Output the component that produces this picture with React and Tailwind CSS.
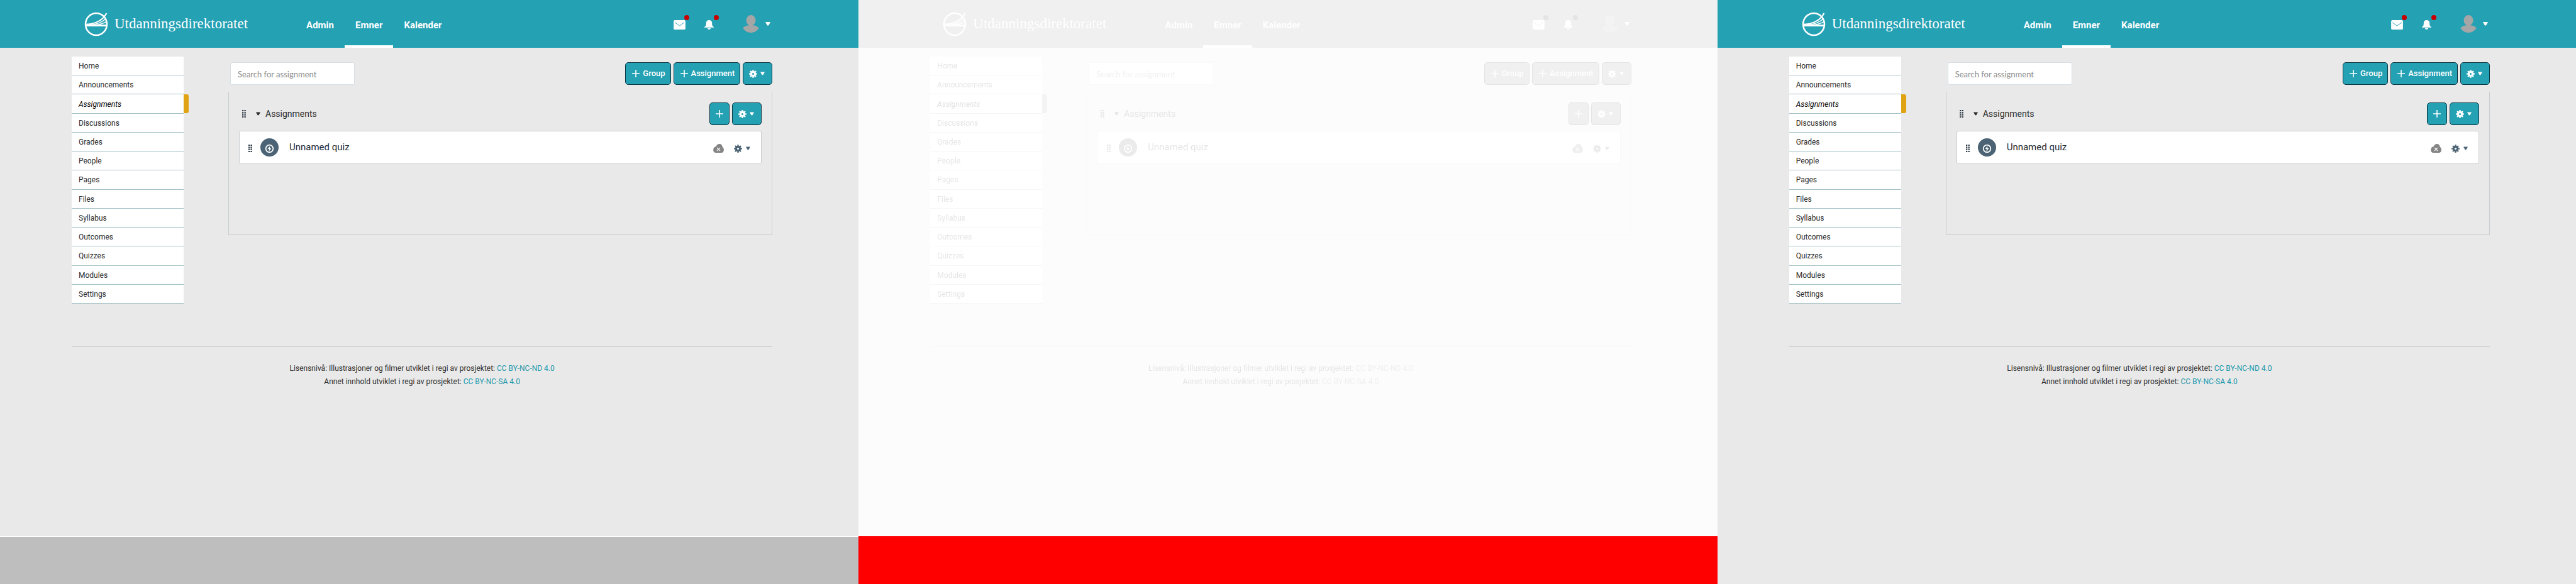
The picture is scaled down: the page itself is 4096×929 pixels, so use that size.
const MENU = [
  "Home", "Announcements", "Assignments", "Discussions", "Grades", "People", "Pages",
  "Files", "Syllabus", "Outcomes", "Quizzes", "Modules", "Settings",
];

function Logo() {
  return (
    <svg className="h-[39px] w-[38px]" viewBox="34 28 120 124" fill="none" stroke="#fff" aria-hidden="true">
      <ellipse cx="94" cy="90" rx="54" ry="56" strokeWidth="8" />
      <path d="M146 34C130 66 94 88 44 91" strokeWidth="7" />
      <path d="M142 63C124 80 92 92 60 94" strokeWidth="5" />
      <path d="M146 77C132 85 112 92 92 94" strokeWidth="5" />
      <path d="M40 97H149" strokeWidth="9" />
    </svg>
  );
}

function MailIcon() {
  return (
    <svg className="h-[15px] w-[19px]" viewBox="0 0 20 16" aria-hidden="true">
      <rect width="20" height="16" rx="2" fill="#fff" />
      <path d="M2 4l8 5.6L18 4" fill="none" stroke="#25a1b4" strokeWidth="1" />
    </svg>
  );
}

function BellIcon() {
  return (
    <svg className="h-[15px] w-[15px]" viewBox="0 0 16 16" fill="#fff" aria-hidden="true">
      <path d="M8 0C4.900 0 3 2.200 3 5c0 3.800-.5 5-3 6.800V12.500h16v-.7C13.500 10 13 8.800 13 5c0-2.800-1.900-5-5-5z" />
      <path d="M5 13.700h6C10.600 15.200 9.500 16 8 16s-2.600-.8-3-2.300z" />
    </svg>
  );
}

function Avatar() {
  return (
    <svg className="h-[28px] w-[26px]" viewBox="0 0 27 30" fill="#a6a6a6" aria-hidden="true">
      <ellipse cx="13.500" cy="9" rx="8" ry="9" />
      <path d="M10 15h7v2.500c4.500.3 8.500 2 10 5C24 27 19 30 13.500 30S3 27 0 22.500c1.500-3 5.500-4.700 10-5z" />
    </svg>
  );
}

function Caret({ className }) {
  return (
    <svg className={className} viewBox="0 0 8 6" fill="currentColor" aria-hidden="true">
      <path d="M0 0h8L5 5.500H3z" />
    </svg>
  );
}

const TEETH = [0, 45, 90, 135, 180, 225, 270, 315];

function Gear() {
  return (
    <svg className="size-[13px]" viewBox="0 0 14 14" fill="none" stroke="currentColor" aria-hidden="true">
      <circle cx="7" cy="7" r="3.400" strokeWidth="3.400" />
      {TEETH.map((a) => (
        <path key={a} d="M7 2.500V.1" strokeWidth="2.400" transform={`rotate(${a} 7 7)`} />
      ))}
    </svg>
  );
}

function Plus() {
  return (
    <svg className="size-3" viewBox="0 0 12 12" stroke="currentColor" strokeWidth="1.600" aria-hidden="true">
      <path d="M6 0v12M0 6h12" />
    </svg>
  );
}

function Handle() {
  return (
    <svg className="h-3 w-[6px] text-[#2d3b45]" viewBox="0 0 6 12" fill="currentColor" aria-hidden="true">
      {[0, 3.300, 6.600, 9.900].map((y) => (
        <path key={y} d={`M0 ${y}h2.300v2.100H0zM3.500 ${y}h2.300v2.100H3.500z`} />
      ))}
    </svg>
  );
}

function QuizIcon() {
  return (
    <svg className="size-[29px]" viewBox="0 0 30 30" aria-hidden="true">
      <circle cx="15" cy="15" r="15" fill="#4b6374" />
      <circle cx="15" cy="17" r="6" fill="none" stroke="#fff" strokeWidth="1.800" />
      <path d="M15.900 12.600l-4 4.900h2.500l-.4 3.900 4.100-4.900h-2.600z" fill="#fff" />
    </svg>
  );
}

function Cloud() {
  return (
    <svg className="h-[14px] w-[17px]" viewBox="0 0 18 15" aria-hidden="true">
      <path d="M4.500 15C1.800 15 0 13 0 10.400 0 7 2.200 4.600 5 4.200 5.700 1.600 8 0 10.600 0c3 0 5 2.200 5 5.200 1.500 1 2.400 2.800 2.400 5C18 13 16.500 15 13.800 15z" fill="#848484" />
      <path d="M6.200 6.200l5.600 5.600M11.800 6.200l-5.600 5.600" stroke="#fff" strokeWidth="1.200" />
    </svg>
  );
}

function Button({ className, children, ...rest }) {
  return (
    <button
      type="button"
      className={`flex h-9 items-center rounded-[5px] border border-[#0b3340] bg-[#25a1b4] text-[13px] font-medium text-white ${className}`}
      {...rest}
    >
      {children}
    </button>
  );
}

function GearButton({ label }) {
  return (
    <Button className="gap-[5px] pl-[9px] pr-[11px]" aria-label={label}>
      <Gear />
      <Caret className="h-[6px] w-[7px]" />
    </Button>
  );
}

function TopBar() {
  return (
    <header className="flex h-[76px] items-center bg-[#25a1b4] pl-[134px] pr-[140px] text-white">
      <a href="#home" className="flex items-center gap-[10px] font-['Liberation_Serif',serif] text-[23px]">
        <Logo />
        Utdanningsdirektoratet
      </a>
      <nav className="ml-[76px] flex h-full text-[15px] font-bold">
        {["Admin", "Emner", "Kalender"].map((item) => (
          <a
            key={item}
            href={`#${item}`}
            className={`flex items-center border-b-4 px-[17px] pt-2 ${item === "Emner" ? "border-white" : "border-transparent"}`}
          >
            {item}
          </a>
        ))}
      </nav>
      <div className="ml-auto flex items-center">
        <button type="button" aria-label="Inbox" className="relative mt-[3px]">
          <MailIcon />
          <span className="absolute -right-[6px] -top-2 size-2 rounded-full bg-[#c80000]" />
        </button>
        <button type="button" aria-label="Notifications" className="relative ml-[30px] mt-[3px]">
          <BellIcon />
          <span className="absolute -right-2 -top-2 size-2 rounded-full bg-[#c80000]" />
        </button>
        <button type="button" aria-label="Account" className="ml-[46px] flex items-center gap-[10px]">
          <Avatar />
          <Caret className="h-[6px] w-2" />
        </button>
      </div>
    </header>
  );
}

function SideMenu() {
  return (
    <ul className="grid min-h-[393px] w-[178px] shrink-0 auto-rows-fr text-xs">
      {MENU.map((item) => (
        <li key={item} className="relative flex border-b border-[#a3c1c6] bg-white">
          <a href={`#${item}`} className={`flex flex-1 items-center pl-[11px] pt-px ${item === "Assignments" ? "italic text-black" : ""}`}>
            {item}
          </a>
          {item === "Assignments" && (
            <span className="absolute inset-y-0 left-full w-2 rounded-r-[3px] bg-[#e0a314]" />
          )}
        </li>
      ))}
    </ul>
  );
}

function AssignmentGroup() {
  return (
    <section className="mt-[11px] border border-t-0 border-[#c7cdd1] px-4 pb-28 pt-[17px]">
      <div className="flex items-center pl-[5px]">
        <Handle />
        <button type="button" aria-expanded="true" className="ml-4 flex items-center gap-2 text-sm">
          <Caret className="h-[6px] w-[7px]" />
          Assignments
        </button>
        <div className="ml-auto flex gap-1">
          <Button className="px-[9px]" aria-label="Add assignment to group">
            <Plus />
          </Button>
          <GearButton label="Group settings" />
        </div>
      </div>
      <div className="mt-[9px] flex h-[53px] items-center rounded-[3px] border border-[#c7cdd1] bg-white pl-[14px] pr-[17px] text-[#4b6374]">
        <span className="mt-[3px]">
          <Handle />
        </span>
        <span className="ml-[13px]">
          <QuizIcon />
        </span>
        <a href="#quiz" className="ml-[17px] text-[15px] text-[#1f2d37]">Unnamed quiz</a>
        <button type="button" aria-label="Publish" className="ml-auto mt-[3px]">
          <Cloud />
        </button>
        <button type="button" aria-label="Quiz settings" className="ml-4 mt-[3px] flex items-center gap-[6px]">
          <Gear />
          <Caret className="h-[6px] w-[7px]" />
        </button>
      </div>
    </section>
  );
}

function Page() {
  return (
    <>
      <TopBar />
      <div className="flex-1 bg-[#e9e9e9] pl-[114px] pr-[137px] pt-[14px]">
        <div className="flex gap-[71px]">
          <SideMenu />
          <main className="flex-1 pt-[9px]">
            <div className="flex gap-1 pl-[3px]">
              <input
                type="text"
                aria-label="Search for assignment"
                placeholder="Search for assignment"
                className="mr-auto h-9 w-[198px] rounded-[3px] border border-[#d5dfe6] bg-white px-[11px] pt-[2px] font-['Lato',sans-serif] text-[13px] placeholder:text-[#8c8c8c]"
              />
              <Button className="gap-[5px] pl-[10px] pr-2"><Plus />Group</Button>
              <Button className="gap-[5px] pl-[10px] pr-2"><Plus />Assignment</Button>
              <GearButton label="Assignment settings" />
            </div>
            <AssignmentGroup />
          </main>
        </div>
        <footer className="mt-[68px] border-t border-[#c8cccd] pt-6 text-center text-xs leading-[21px]">
          <p>
            Lisensnivå: Illustrasjoner og filmer utviklet i regi av prosjektet:{" "}
            <a href="#by-nc-nd" className="text-[#1b98ab]">CC BY-NC-ND 4.0</a>
          </p>
          <p>
            Annet innhold utviklet i regi av prosjektet:{" "}
            <a href="#by-nc-sa" className="text-[#1b98ab]">CC BY-NC-SA 4.0</a>
          </p>
        </footer>
      </div>
    </>
  );
}

export default function App() {
  return (
    <div className="grid min-h-screen grid-cols-3 bg-white font-['Roboto',sans-serif] text-[#2d2d2d]">
      <div className="flex flex-col">
        <Page />
        <div className="h-[76px] border-t border-white bg-[#bebebe]" />
      </div>
      <div className="flex flex-col">
        <div className="flex flex-1 flex-col opacity-[0.12] grayscale">
          <Page />
        </div>
        <div className="h-[76px] bg-[#ff0000]" />
      </div>
      <div className="flex flex-col">
        <Page />
      </div>
    </div>
  );
}
